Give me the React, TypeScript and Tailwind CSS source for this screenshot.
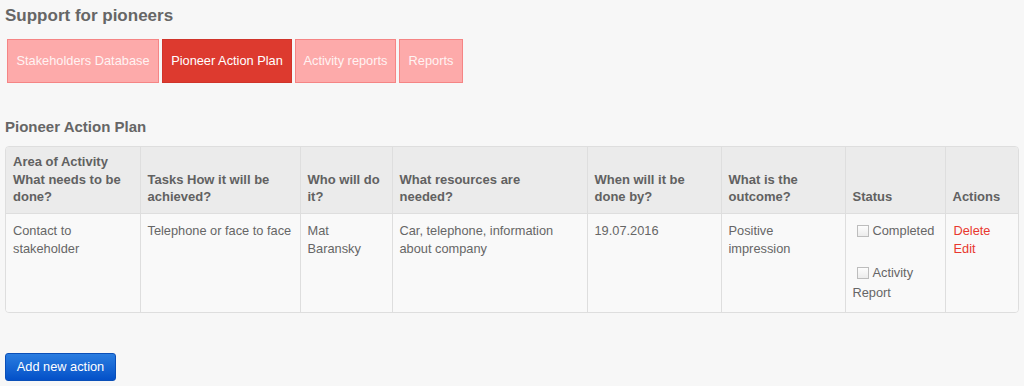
import { useState } from 'react';

const tabs = [
    { label: 'Stakeholders Database', w: 'w-[152px]' },
    { label: 'Pioneer Action Plan', w: 'w-[130px]' },
    { label: 'Activity reports', w: 'w-[101px]' },
    { label: 'Reports', w: 'w-[64px]' },
];

const columns = [
    { label: 'Area of Activity What needs to be done?', w: 'w-[134px]' },
    { label: 'Tasks How it will be achieved?', w: 'w-[160px]' },
    { label: 'Who will do it?', w: 'w-[92px]' },
    { label: 'What resources are needed?', w: 'w-[195px] pr-[24px]' },
    { label: 'When will it be done by?', w: 'w-[134px]' },
    { label: 'What is the outcome?', w: 'w-[124px]' },
    { label: 'Status', w: 'w-[100px]' },
    { label: 'Actions', w: 'w-[73px]' },
];

const checkboxClass =
    'ml-[4px] mr-[4px] h-[12px] w-[12px] appearance-none border border-[#bdbdbd] bg-gradient-to-b from-[#fdfdfd] to-[#ececec] align-[-2px] checked:from-[#dd3a2f] checked:to-[#c9302c]';

export default function App() {
    const [active, setActive] = useState(1);
    const [completed, setCompleted] = useState(false);
    const [reported, setReported] = useState(false);

    return (
        <div className="min-h-[386px] bg-[#f7f7f7] px-[5px] pt-[6px] font-['Liberation_Sans',Arial,sans-serif] text-[12.8px] text-[#666]">
            <h1 className="text-[17px] font-bold leading-[20px] text-[#666]">Support for pioneers</h1>

            {/* Tabs */}
            <div className="mt-[13px] ml-[2px] flex gap-[3px]">
                {tabs.map((t, i) => (
                    <button
                        key={t.label}
                        onClick={() => setActive(i)}
                        className={
                            t.w +
                            ' h-[44px] border text-center text-[12.8px] leading-none ' +
                            (i === active
                                ? 'bg-[#dd3a2f] border-[#d0342a] text-white'
                                : 'bg-[#fdaaaa] border-[#f58585] text-[#fff3f3]')
                        }
                    >
                        {t.label}
                    </button>
                ))}
            </div>

            <h2 className="mt-[35px] text-[15px] font-bold leading-[18px] text-[#666]">Pioneer Action Plan</h2>

            {/* Table */}
            <div className="mt-[10px] w-[1014px] overflow-hidden rounded-[4px] border border-[#dedede]">
                <table className="w-full table-fixed border-collapse">
                    <thead>
                        <tr className="bg-[#ebebeb]">
                            {columns.map((c, i) => (
                                <th
                                    key={c.label}
                                    className={
                                        'h-[66px] align-bottom pl-[7px] pr-[7px] pb-[7px] text-left text-[13px] font-bold leading-[17.5px] text-[#616161] border-b border-[#dedede] ' +
                                        c.w +
                                        (i > 0 ? ' border-l' : '')
                                    }
                                >
                                    {c.label}
                                </th>
                            ))}
                        </tr>
                    </thead>
                    <tbody>
                        <tr className="bg-[#f9f9f9] align-top leading-[18px]">
                            <td className="h-[99px] px-[7px] pt-[8px]">Contact to stakeholder</td>
                            <td className="border-l border-[#dedede] px-[7px] pt-[8px]">Telephone or face to face</td>
                            <td className="border-l border-[#dedede] px-[7px] pt-[8px]">Mat Baransky</td>
                            <td className="border-l border-[#dedede] px-[7px] pt-[8px]">Car, telephone, information about company</td>
                            <td className="border-l border-[#dedede] px-[7px] pt-[8px]">19.07.2016</td>
                            <td className="border-l border-[#dedede] px-[7px] pt-[8px]">Positive impression</td>
                            <td className="border-l border-[#dedede] px-[7px] pt-[7px] leading-[20px]">
                                <label className="mb-[22px] block">
                                    <input
                                        type="checkbox"
                                        checked={completed}
                                        onChange={(e) => setCompleted(e.target.checked)}
                                        className={checkboxClass}
                                    />
                                    Completed
                                </label>
                                <label className="block">
                                    <input
                                        type="checkbox"
                                        checked={reported}
                                        onChange={(e) => setReported(e.target.checked)}
                                        className={checkboxClass}
                                    />
                                    Activity Report
                                </label>
                            </td>
                            <td className="border-l border-[#dedede] pl-[8px] pr-[6px] pt-[8px] text-[#e8382f]">
                                <a href="#" className="block">Delete</a>
                                <a href="#" className="block">Edit</a>
                            </td>
                        </tr>
                    </tbody>
                </table>
            </div>

            <button className="mt-[40px] h-[28px] w-[111px] rounded-[3px] border border-[#0a4fb8] bg-gradient-to-b from-[#2a7de0] to-[#0450c8] text-[12.8px] text-white">
                Add new action
            </button>
        </div>
    );
}
